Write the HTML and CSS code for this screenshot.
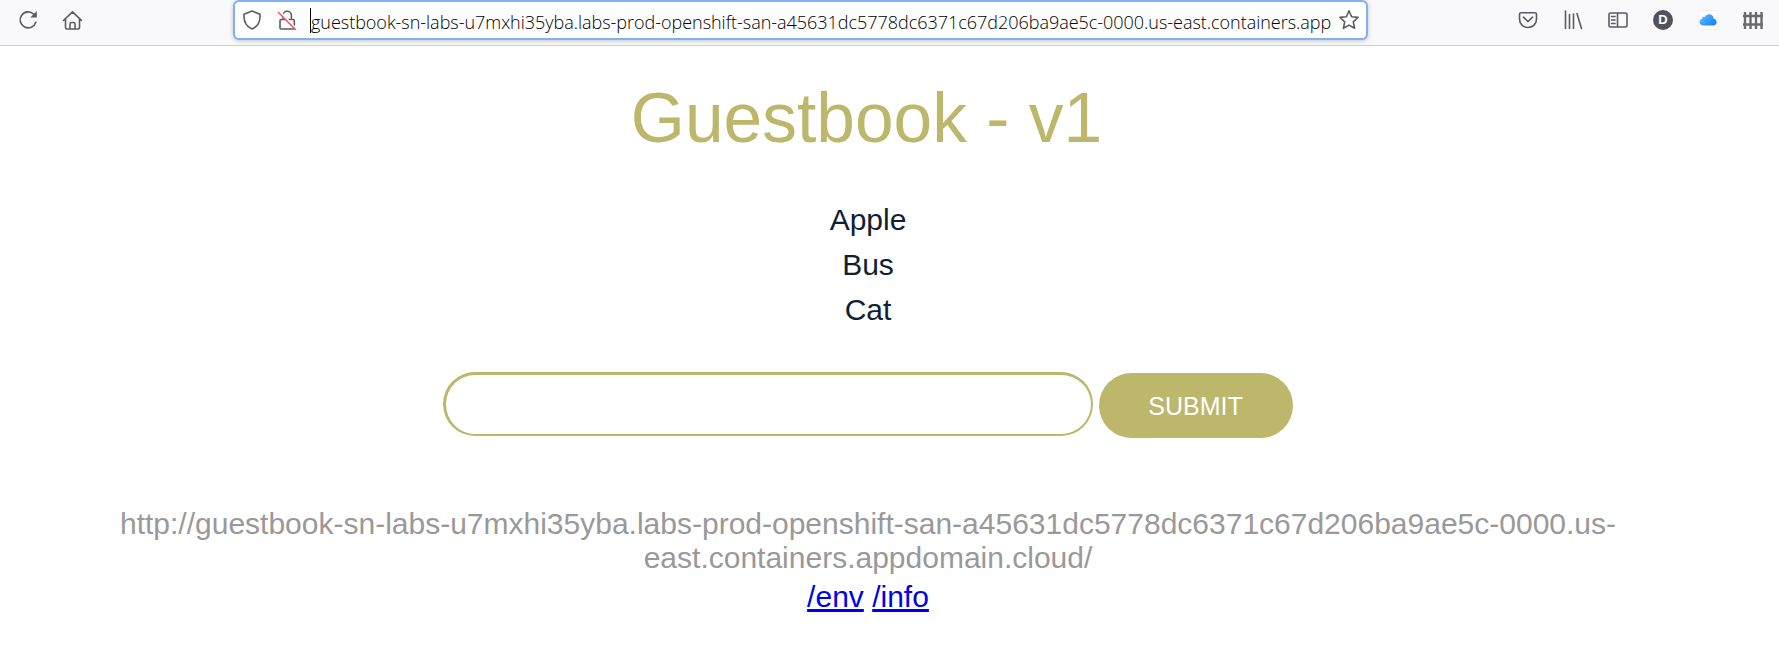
FILE: index.html
```html
<!DOCTYPE html>
<html lang="en">
<head>
<meta charset="utf-8">
<title>Guestbook - v1</title>
<link rel="stylesheet" href="styles.css">
</head>
<body>
<header class="toolbar">
  <nav class="nav-buttons">
    <svg class="icon" width="20" height="20" viewBox="0 0 20 20"><path d="M17.800 12.200A8 8 0 1 1 15.800 4.200" /><path class="solid" d="M18.800 1v6.500h-6.500z"/></svg>
    <svg class="icon" width="20" height="20" viewBox="0 0 20 20"><path d="M1.500 10.500L10.500 1.800l9 8.700M3.500 9v8.600q0 1.400 1.400 1.400h11.200q1.400 0 1.400-1.400V9M8 19v-5q0-1.500 1.500-1.500h2q1.500 0 1.500 1.500v5"/></svg>
  </nav>
  <div class="urlbar">
    <svg class="icon shield" width="20" height="20" viewBox="0 0 20 20"><path d="M10 1l8 3.200c.5 6.800-1.500 12-8 14.800C3.500 16.200 1.500 11 2 4.200z"/></svg>
    <svg class="icon lock" width="20" height="20" viewBox="0 0 20 20"><path d="M6 8V5.500a4.200 4.200 0 0 1 8.400 0V8M4 9.500h12.300q1 0 1 1v7.500q0 1-1 1H4q-1 0-1-1v-7.500q0-1 1-1z"/><path class="strike-gap" d="M3.500 2.200l15 16"/><path class="strike" d="M1.500 2.500l17 17"/></svg>
    <span class="caret"></span>
    <span class="address">guestbook-sn-labs-u7mxhi35yba.labs-prod-openshift-san-a45631dc5778dc6371c67d206ba9ae5c-0000.us-east.containers.app</span>
    <svg class="icon star" width="22" height="22" viewBox="0 0 22 22"><path d="M11 1.800l2.600 5.900 6.400.7-4.700 4.400 1.300 6.500-5.600-3.200-5.600 3.200 1.300-6.500L2 8.400l6.400-.7z"/></svg>
  </div>
  <div class="tools">
    <svg class="icon" width="20" height="20" viewBox="0 0 20 20"><path d="M3 2.800h14q1.500 0 1.500 1.500V9c0 5-3.800 8.500-8.500 8.500S1.500 14 1.500 9V4.300q0-1.500 1.500-1.500zM5.500 7.200L10 11.500l4.500-4.300"/></svg>
    <svg class="icon" width="20" height="20" viewBox="0 0 20 20"><path d="M2.500 1v17.500M6.500 4.500v14M10.500 4v14.500M14 3.500l4.500 15"/></svg>
    <svg class="icon" width="20" height="20" viewBox="0 0 20 20"><path d="M2.500 3h15q1.500 0 1.500 1.500v11q0 1.500-1.500 1.500h-15Q1 17 1 15.500v-11Q1 3 2.500 3zM9.500 3v14M3.500 6.500h3.500M3.500 10h3.500M3.500 13.500h3.500"/></svg>
    <span class="account">D</span>
    <span class="cloud"><svg width="18" height="12" viewBox="0 0 18 12"><defs><linearGradient id="sky" x1="0" x2="1" y1="0" y2=".6"><stop offset="0" stop-color="#63c6ff"/><stop offset="1" stop-color="#1c83f8"/></linearGradient></defs><path fill="url(#sky)" d="M4.500 11.500C-.5 11.500-.5 5.500 3 5 3 2.500 5 2.500 6 3c1.500-4 8.500-3.500 8.500 1.500 4 .5 4.500 7-.5 7z"/></svg></span>
    <svg class="fence" width="22" height="20" viewBox="0 0 22 20"><path d="M3 2v17M8.500 2v17M14 2v17M19.500 2v17M1 6h20M1 14.500h20"/></svg>
  </div>
</header>
<main class="page">
  <h1 class="title">Guestbook - v1</h1>
  <div class="entries"><p class="entry">Apple</p><p class="entry">Bus</p><p class="entry">Cat</p></div>
  <form class="entry-form">
    <input class="entry-input" type="text" aria-label="Entry">
    <button class="submit" type="button">SUBMIT</button>
  </form>
  <p class="host">http://guestbook-sn-labs-u7mxhi35yba.labs-prod-openshift-san-a45631dc5778dc6371c67d206ba9ae5c-0000.us-<br>east.containers.appdomain.cloud/</p>
  <p class="links"><a href="#env">/env</a> <a href="#info">/info</a></p>
</main>
</body>
</html>
```
FILE: styles.css
```css
* { box-sizing: border-box; }
body { margin: 0; height: 646px; overflow: hidden; background: #fff; font-family: "Liberation Sans", Arial, sans-serif; }
.toolbar { display: flex; align-items: flex-start; height: 46px; background: #f9f9fb; border-bottom: 1px solid #ccccd2; }
.nav-buttons { display: flex; gap: 24px; width: 233px; padding: 10px 0 0 18px; }
.icon { display: block; flex: none; fill: none; stroke: #5b5b66; stroke-width: 1.600; stroke-linejoin: round; stroke-linecap: round; }
.icon .solid { fill: #5b5b66; stroke: none; }
.urlbar { display: flex; align-items: center; flex: none; width: 1135px; height: 40px; padding: 0 7px; background: #fff; border: 2px solid #80b1f2; border-radius: 6px; box-shadow: 0 1px 4px rgba(0,0,0,.22); }
.lock { margin-left: 15px; }
.lock .strike-gap { stroke: #fff; stroke-width: 2; }
.lock .strike { stroke: #ff4f6b; }
.caret { flex: none; width: 1px; height: 25px; margin: 0 0 0 13px; background: #000; }
.address { flex: none; width: 1024px; font-family: "Open Sans", "Noto Sans", sans-serif; font-weight: 300; font-size: 18px; letter-spacing: -.025px; line-height: 36px; color: #000; white-space: nowrap; padding-top: 4px; }
.star { margin-left: 3px; }
.tools { display: flex; align-items: center; gap: 25px; margin-left: 150px; padding-top: 10px; }
.account { display: grid; place-items: center; width: 20px; height: 20px; border-radius: 50%; background: #52525e; color: #fff; font-size: 13px; font-weight: 700; line-height: 20px; }
.cloud { display: grid; place-items: center; width: 20px; height: 20px; background: #fff; border: 1px solid #efeff2; border-radius: 3px; }
.fence { margin-left: -1px; fill: none; stroke: #6b6b6b; stroke-width: 2.400; }
.page { width: 1736px; }
.title { margin: 30px 0 0; height: 84px; padding-right: 3px; font-size: 69.500px; line-height: 84px; font-weight: 400; text-align: center; color: #bdb76b; }
.entries { padding-top: 37px; text-align: center; }
.entry { margin: 0; font-size: 30px; line-height: 45px; color: #0f1f35; }
.entry-form { display: flex; align-items: flex-start; justify-content: center; gap: 6px; width: 1735px; margin-top: 40px; }
.entry-input { width: 650px; height: 64px; border: solid #bdb76b; border-width: 3px 2px 2px 3px; border-radius: 32px; background: #fff; outline: 0; }
.submit { width: 194px; height: 65px; margin-top: 1px; border: 0; border-radius: 33px; padding: 2px 0 0; background: #bdb76b; color: #fff; font: 25px "Liberation Sans", Arial, sans-serif; }
.host { margin: 69px 0 0; font-size: 30px; line-height: 34px; text-align: center; color: #999; white-space: nowrap; }
.links { margin: 5px 0 0; font-size: 30px; line-height: 34px; text-align: center; }
.links a { color: #00e; }
```
